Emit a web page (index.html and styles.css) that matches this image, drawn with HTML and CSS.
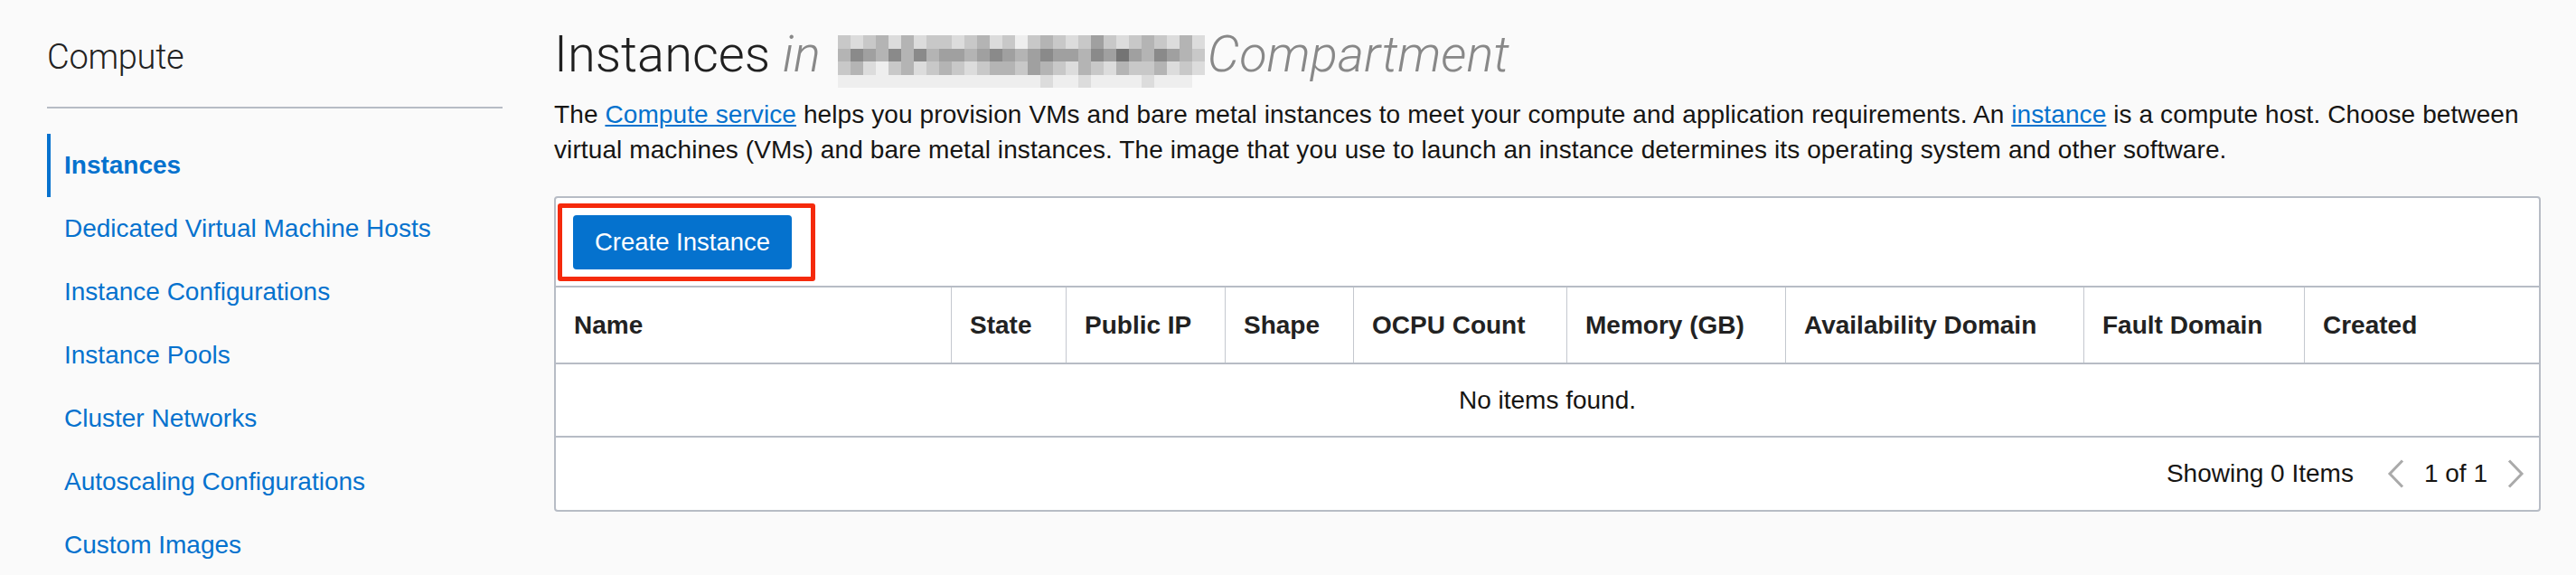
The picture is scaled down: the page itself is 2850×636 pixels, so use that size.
FILE: index.html
```html
<!DOCTYPE html>
<html lang="en">
<head>
<meta charset="utf-8">
<title>Instances - Compute</title>
<link rel="stylesheet" href="styles.css">
</head>
<body>
<div class="page">
  <aside class="sidebar">
    <h2 class="side-title">Compute</h2>
    <div class="side-divider"></div>
    <nav class="side-nav">
      <a class="nav-item active" href="#">Instances</a>
      <a class="nav-item" href="#">Dedicated Virtual Machine Hosts</a>
      <a class="nav-item" href="#">Instance Configurations</a>
      <a class="nav-item" href="#">Instance Pools</a>
      <a class="nav-item" href="#">Cluster Networks</a>
      <a class="nav-item" href="#">Autoscaling Configurations</a>
      <a class="nav-item" href="#">Custom Images</a>
    </nav>
  </aside>
  <main class="main">
    <h1 class="title">Instances <em class="muted">in</em><span class="mosaic-wrap"><span class="mosaic">
      <i class="c2"></i><i class="c1"></i><i class="c2"></i><i class="c3"></i><i class="c1"></i><i class="c3"></i><i class="c1"></i><i class="c2"></i><i class="c2"></i><i class="c1"></i><i class="c2"></i><i class="c3"></i><i class="c1"></i><i class="c2"></i><i class="c0"></i><i class="c2"></i><i class="c3"></i><i class="c2"></i><i class="c1"></i><i class="c2"></i><i class="c4"></i><i class="c2"></i><i class="c1"></i><i class="c2"></i><i class="c3"></i><i class="c2"></i><i class="c1"></i><i class="c3"></i><i class="c1"></i>
      <i class="c3"></i><i class="c5"></i><i class="c4"></i><i class="c3"></i><i class="c5"></i><i class="c3"></i><i class="c5"></i><i class="c3"></i><i class="c4"></i><i class="c4"></i><i class="c3"></i><i class="c4"></i><i class="c5"></i><i class="c4"></i><i class="c3"></i><i class="c4"></i><i class="c5"></i><i class="c4"></i><i class="c4"></i><i class="c3"></i><i class="c5"></i><i class="c4"></i><i class="c6"></i><i class="c4"></i><i class="c3"></i><i class="c5"></i><i class="c4"></i><i class="c3"></i><i class="c2"></i>
      <i class="c2"></i><i class="c3"></i><i class="c1"></i><i class="c0"></i><i class="c2"></i><i class="c3"></i><i class="c1"></i><i class="c2"></i><i class="c3"></i><i class="c2"></i><i class="c1"></i><i class="c2"></i><i class="c3"></i><i class="c3"></i><i class="c2"></i><i class="c4"></i><i class="c3"></i><i class="c2"></i><i class="c1"></i><i class="c3"></i><i class="c2"></i><i class="c1"></i><i class="c3"></i><i class="c2"></i><i class="c2"></i><i class="c3"></i><i class="c1"></i><i class="c2"></i><i class="c1"></i>
      <i class="c0"></i><i class="c0"></i><i class="c0"></i><i class="c0"></i><i class="c0"></i><i class="c0"></i><i class="c0"></i><i class="c0"></i><i class="c0"></i><i class="c0"></i><i class="c0"></i><i class="c0"></i><i class="c0"></i><i class="c0"></i><i class="c0"></i><i class="c0"></i><i class="c1"></i><i class="c0"></i><i class="c0"></i><i class="c1"></i><i class="c0"></i><i class="c0"></i><i class="c0"></i><i class="c0"></i><i class="c1"></i><i class="c0"></i><i class="c0"></i><i class="c0"></i><i class="cw"></i>
    </span></span><em class="muted">Compartment</em></h1>
    <p class="intro">The <a href="#">Compute service</a> helps you provision VMs and bare metal instances to meet your compute and application requirements. An <a href="#">instance</a> is a compute host. Choose between virtual machines (VMs) and bare metal instances. The image that you use to launch an instance determines its operating system and other software.</p>

    <section class="panel">
      <div class="toolbar">
        <button class="btn-primary" type="button">Create Instance</button>
        <span class="highlight"></span>
      </div>
      <div class="grid-head">
        <div class="th">Name</div>
        <div class="th">State</div>
        <div class="th">Public IP</div>
        <div class="th">Shape</div>
        <div class="th">OCPU Count</div>
        <div class="th">Memory (GB)</div>
        <div class="th">Availability Domain</div>
        <div class="th">Fault Domain</div>
        <div class="th">Created</div>
      </div>
      <div class="empty-row">No items found.</div>
      <div class="panel-footer">
        <span class="count">Showing 0 Items</span>
        <span class="pager">
          <svg class="chev" width="20" height="32" viewBox="0 0 20 32" aria-hidden="true"><polyline points="17,1.5 3,16 17,30.5" fill="none" stroke="#aaaaaa" stroke-width="3"/></svg>
          <span class="page-num">1 of 1</span>
          <svg class="chev" width="20" height="32" viewBox="0 0 20 32" aria-hidden="true"><polyline points="3,1.5 17,16 3,30.5" fill="none" stroke="#aaaaaa" stroke-width="3"/></svg>
        </span>
      </div>
    </section>
  </main>
</div>
</body>
</html>
```

FILE: styles.css
```css
* { box-sizing: border-box; }

html, body {
  margin: 0;
  padding: 0;
  background: #fafafa;
  font-family: "Liberation Sans", Arial, sans-serif;
  color: #161513;
}

.page {
  display: flex;
  align-items: flex-start;
  width: 2850px;
  height: 636px;
  overflow: hidden;
}

/* ---------- Sidebar ---------- */
.sidebar {
  flex: 0 0 556px;
  padding-left: 52px;
  padding-top: 44px;
}

.side-title {
  margin: 0;
  font-family: Roboto, "Liberation Sans", sans-serif;
  font-weight: 300;
  font-size: 38px;
  line-height: 38px;
  color: #222222;
  letter-spacing: -0.3px;
}

.side-divider {
  height: 2px;
  background: #b7bcc5;
  margin-top: 36px;
  margin-bottom: 28px;
}

.side-nav {
  display: flex;
  flex-direction: column;
}

.nav-item {
  display: block;
  height: 70px;
  line-height: 70px;
  padding-left: 15px;
  border-left: 4px solid transparent;
  font-size: 28px;
  color: #0572ce;
  text-decoration: none;
  white-space: nowrap;
}

.nav-item.active {
  border-left-color: #0572ce;
  font-weight: bold;
}

/* ---------- Main ---------- */
.main {
  flex: 1;
  padding-left: 57px;
  padding-right: 39px;
  padding-top: 32px;
}

.title {
  margin: 0;
  height: 56px;
  font-family: Roboto, "Liberation Sans", sans-serif;
  font-weight: 300;
  font-size: 56px;
  line-height: 56px;
  color: #1f1f1f;
  white-space: nowrap;
}

.muted {
  color: #888888;
  font-style: italic;
}

.mosaic-wrap {
  display: inline-block;
  overflow: hidden;
  vertical-align: -18px;
  height: 58px;
  margin-left: 19px;
  margin-right: 3px;
}

.mosaic {
  display: grid;
  grid-template-columns: repeat(29, 14px);
  grid-auto-rows: 14.5px;
}

.mosaic i { display: block; }
.mosaic .cw { background: #fafafa; }
.mosaic .c0 { background: #eeeeee; }
.mosaic .c1 { background: #dcdcdc; }
.mosaic .c2 { background: #c8c8c8; }
.mosaic .c3 { background: #b4b4b4; }
.mosaic .c4 { background: #a0a0a0; }
.mosaic .c5 { background: #8a8a8a; }
.mosaic .c6 { background: #747474; }

.intro {
  margin: 19px 0 0 0;
  font-size: 28px;
  letter-spacing: 0.1px;
  line-height: 39px;
  color: #161513;
}

.intro a {
  color: #0572ce;
  text-decoration: underline;
}

/* ---------- Panel / table ---------- */
.panel {
  margin-top: 32px;
  background: #ffffff;
  border: 2px solid #b7bcc5;
  border-radius: 4px;
}

.toolbar {
  position: relative;
  padding: 19px 19px 18px 19px;
  border-bottom: 2px solid #b7bcc5;
}

.btn-primary {
  display: block;
  width: 242px;
  height: 60px;
  border: none;
  border-radius: 4px;
  background: #0572ce;
  color: #ffffff;
  font-family: "Liberation Sans", Arial, sans-serif;
  font-size: 27.5px;
  padding: 0;
}

.highlight {
  position: absolute;
  left: 2px;
  top: 6px;
  width: 285px;
  height: 86px;
  border: 5px solid #f52a0c;
  border-radius: 3px;
  pointer-events: none;
}

.grid-head {
  display: grid;
  grid-template-columns: 437px 127px 176px 142px 236px 242px 330px 244px 1fr;
  height: 85px;
  border-bottom: 2px solid #b7bcc5;
}

.th {
  padding-left: 20px;
  line-height: 83px;
  font-size: 28px;
  font-weight: bold;
  color: #222222;
  white-space: nowrap;
}

.th + .th {
  border-left: 1px solid #c4c8cf;
}

.empty-row {
  height: 81px;
  line-height: 79px;
  text-align: center;
  font-size: 28px;
  color: #161513;
  border-bottom: 2px solid #b7bcc5;
}

.panel-footer {
  display: flex;
  justify-content: flex-end;
  align-items: center;
  height: 80px;
  padding-right: 16px;
  font-size: 28px;
  color: #161513;
}

.count {
  margin-right: 37px;
}

.pager {
  display: flex;
  align-items: center;
  gap: 21px;
}

.chev {
  display: block;
  width: 20px;
  height: 32px;
}
```
